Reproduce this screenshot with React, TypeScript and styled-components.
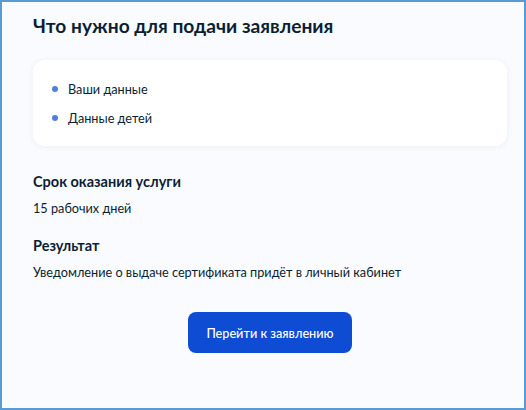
import React from "react";
import styled, { createGlobalStyle } from "styled-components";

const GlobalStyle = createGlobalStyle`
  html, body {
    margin: 0;
    padding: 0;
    background: #ffffff;
  }
  body {
    font-family: Lato, "Noto Sans", sans-serif;
    color: #0b1f33;
  }
`;

const Frame = styled.div`
  box-sizing: border-box;
  width: 526px;
  height: 410px;
  border: 2px solid #5b9bd5;
  background: #f9fbfe;
  padding: 12px 17px 0 31px;
  display: flex;
  flex-direction: column;
`;

const Title = styled.h2`
  margin: 0;
  font-size: 19.2px;
  line-height: 24px;
  font-weight: 700;
  color: #0b1f33;
`;

const Card = styled.ul`
  list-style: none;
  margin: 22px 0 0;
  padding: 19px 19px 18px 19px;
  background: #ffffff;
  border-radius: 12px;
  box-shadow: 0 1px 6px rgba(11, 31, 51, 0.06);
  display: flex;
  flex-direction: column;
  gap: 9px;
`;

const Item = styled.li`
  display: flex;
  align-items: center;
  gap: 10px;
  font-size: 12.7px;
  line-height: 20px;
  color: #0b1f33;

  &::before {
    content: "";
    width: 6px;
    height: 6px;
    border-radius: 50%;
    background: #4d7fe0;
    flex-shrink: 0;
  }
`;

const Section = styled.div<{ $top: number }>`
  display: flex;
  flex-direction: column;
  gap: 6px;
  margin-top: ${(p) => p.$top}px;
`;

const SectionTitle = styled.h3`
  margin: 0;
  font-size: 14.5px;
  line-height: 20px;
  font-weight: 700;
  color: #0b1f33;
`;

const SectionText = styled.p`
  margin: 0;
  font-size: 12.7px;
  line-height: 20px;
  color: #0b1f33;
`;

const Actions = styled.div`
  display: flex;
  justify-content: center;
  margin-top: 30px;
`;

const PrimaryButton = styled.button`
  width: 164px;
  height: 41px;
  border: none;
  border-radius: 8px;
  background: #0d4cd3;
  color: #ffffff;
  font-family: Lato, "Noto Sans", sans-serif;
  font-size: 12.7px;
  font-weight: 500;
  cursor: pointer;
`;

const App = (): JSX.Element => {
  return (
    <>
      <GlobalStyle />
      <Frame>
        <Title>Что нужно для подачи заявления</Title>
        <Card>
          <Item>Ваши данные</Item>
          <Item>Данные детей</Item>
        </Card>
        <Section $top={26}>
          <SectionTitle>Срок оказания услуги</SectionTitle>
          <SectionText>15 рабочих дней</SectionText>
        </Section>
        <Section $top={18}>
          <SectionTitle>Результат</SectionTitle>
          <SectionText>
            Уведомление о выдаче сертификата придёт в личный кабинет
          </SectionText>
        </Section>
        <Actions>
          <PrimaryButton>Перейти к заявлению</PrimaryButton>
        </Actions>
      </Frame>
    </>
  );
};

export default App;
